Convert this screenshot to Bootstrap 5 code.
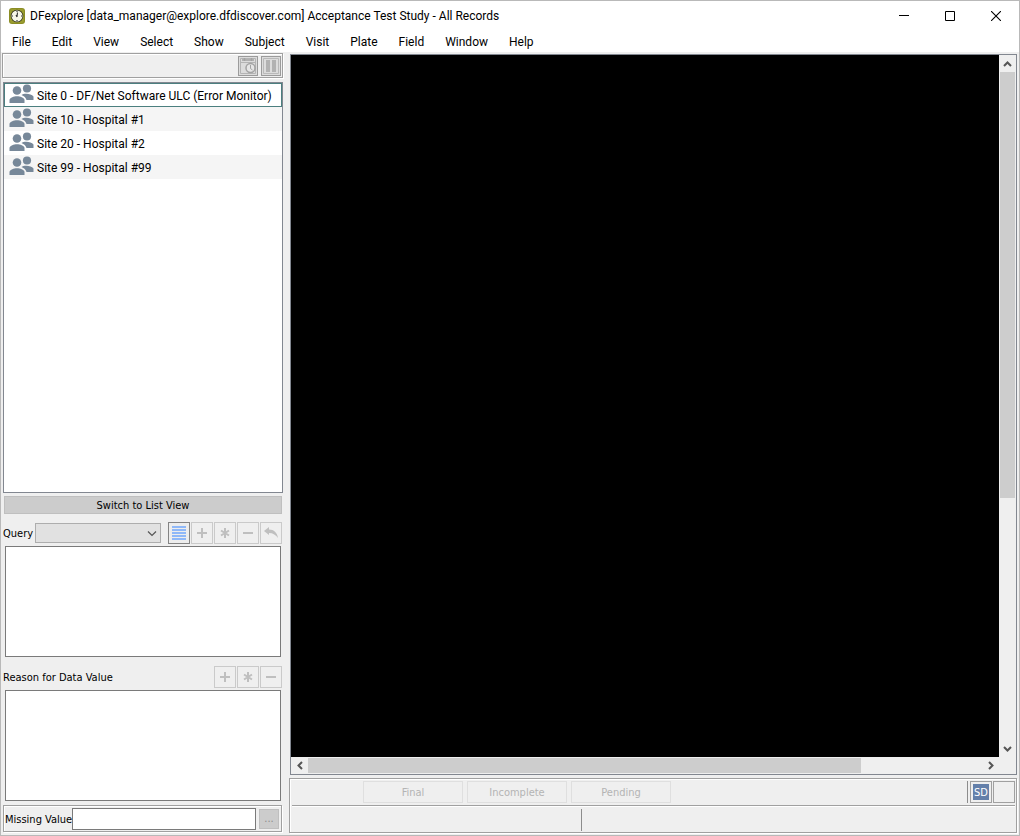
<!DOCTYPE html>
<html lang="en">
<head>
<meta charset="utf-8">
<meta name="viewport" content="width=device-width, initial-scale=1">
<title>DFexplore</title>
<link href="https://cdn.jsdelivr.net/npm/bootstrap@5.3.0/dist/css/bootstrap.min.css" rel="stylesheet">
<style>
  :root { --face: #efefef; --line: #a0a0a0; --dark: #828790; }
  body { font-family: Roboto, "Noto Sans", sans-serif; font-size: 12px; line-height: 16px; color: #000; background: var(--face); }
  button, input, select, textarea { border-radius: 0; font: inherit; }
  svg { display: block; }
  .app-window { border: 1px solid #b9b9b9; }
  .title-bar { height: 30px; padding-left: 8px; background: #fff; }
  .title-text { padding-left: 5px; }
  .win-btn { width: 46px; height: 30px; padding: 0; border: 0; background: transparent; display: grid; place-items: center; }
  .menu-bar { height: 21px; background: #fff; }
  .menu-bar a { color: #000; text-decoration: none; padding: 3px 10px 2px 11px; }
  .work-area { padding: 1px 2px 2px 1px; }
  .side-pane { width: 281px; margin-right: 6px; padding-bottom: 1px; font-family: "DejaVu Sans Condensed", sans-serif; font-size: 11px; }
  .side-pane label { padding-top: 2px; }
  .etched { border: 1px solid var(--line); box-shadow: inset 1px 1px #fff, 1px 1px #fff; }
  .side-tools { height: 25px; padding: 0 1px; gap: 3px; }
  .tool-btn { width: 20px; height: 20px; padding: 0; border: 1px solid #9b9b9b; background: #dcdcdc; }
  .site-list { margin: 4px 0 0 1px; border: 1px solid var(--dark); background: #fff; font-family: Roboto, sans-serif; font-size: 12px; }
  .site-list .list-group-item { height: 24px; padding: 0 0 0 5px; border: 0; border-radius: 0; color: #000; gap: 3px; background: #fff; }
  .site-list .list-group-item span { padding-top: 2px; }
  .site-list .list-group-item svg { margin-bottom: 4px; }
  .site-list .list-group-item:nth-child(even) { background: #f5f5f5; }
  .site-list .list-group-item.current { box-shadow: inset 0 0 0 1px #4b7f7f; }
  .switch-btn { height: 18px; margin: 3px 1px 0 2px; padding: 1px 0 0; border: 1px solid #bfbfbf; background: #cccccc; line-height: 16px; }
  .tool-row { height: 22px; margin: 8px 1px 0 1px; }
  .note-box + .tool-row { margin-top: 9px; }
  .query-box { width: 126px; height: 20px; margin: 0 7px 0 2px; border: 1px solid #adadad; background: #e1e1e1; appearance: none; }
  .select-wrap { position: relative; }
  .select-wrap svg { position: absolute; right: 11px; top: 8px; pointer-events: none; }
  .mini-btns { gap: 1px; }
  .mini-btn { width: 22px; height: 22px; padding: 0; border: 1px solid #cacaca; background: var(--face); display: grid; place-items: center; }
  .mini-btn.active-tool { border-color: #848484; background: #ededed; }
  .note-box { display: block; height: 111px; margin: 2px 2px 0 3px; border: 1px solid #7a7a7a; background: #fff; resize: none; outline: 0; }
  .missing-row { height: 27px; margin: 4px 1px 0 1px; padding-left: 1px; }
  .missing-row input { height: 22px; margin: 0 3px 0 0; border: 1px solid #7a7a7a; min-width: 0; }
  .dots-btn { width: 20px; height: 20px; margin-right: 2px; padding: 0; border: 1px solid #bfbfbf; background: #ccc; color: #8c8c8c; }
  .viewer { margin: 1px 0 0 1px; border: 1px solid var(--dark); }
  .canvas-area { background: #000; }
  .v-scroll { width: 17px; padding: 0 1px; }
  .h-scroll { height: 17px; padding: 1px 17px 1px 0; }
  .scroll-btn { width: 17px; height: 15px; padding: 0; border: 0; background: transparent; display: grid; place-items: center; }
  .v-scroll .scroll-btn { width: 15px; height: 17px; }
  .thumb { background: #cdcdcd; }
  .status-area { height: 55px; margin-top: 3px; }
  .status-top { height: 27px; padding: 2px 0 0; margin: 0 1px 0 2px; border-bottom: 1px solid var(--line); box-shadow: 0 1px #fff; }
  .state-btn { width: 100px; height: 22px; padding: 1px 0 0; border: 1px solid #dfdfdf; background: var(--face); color: #b4b4b4; font-family: "DejaVu Sans Condensed", sans-serif; font-size: 11px; line-height: 20px; }
  .state-group { gap: 4px; margin-left: 71px; }
  .sd-group { gap: 1px; }
  .sd-rule { width: 1px; height: 22px; margin-right: 1px; background: #8c8c8c; }
  .sd-frame { width: 22px; height: 22px; padding: 1px; border: 1px solid var(--line); }
  .sd-btn { height: 18px; padding-top: 1px; border: 1px solid var(--face); background: #6480aa; color: #fff; font-family: "DejaVu Sans Condensed", sans-serif; font-size: 11px; line-height: 16px; text-align: center; }
  .status-split { border-right: 1px solid #8c8c8c; height: 22px; margin-top: 3px; width: 292px; }
</style>
</head>
<body>
<svg class="d-none" aria-hidden="true">
  <symbol id="people" viewBox="0 0 25 19"><g fill="#778899"><circle cx="18" cy="4.500" r="4.100"/><path d="M12.500 11c2-1.800 9.500-2 12 1.600V16h-7c-.5-2.300-2.400-4-5-5z"/><circle cx="8" cy="6.500" r="4.300"/><path d="M.5 19v-3.200C2 11 14 11 15.500 15.800V19z"/></g></symbol>
  <symbol id="plus" viewBox="0 0 12 12"><path d="M6 1v10M1 6h10" stroke="#bfbfbf" stroke-width="2"/></symbol>
  <symbol id="star" viewBox="0 0 12 12"><path d="M6 1v10M2 3.500l8 5M2 8.500l8-5" stroke="#bfbfbf" stroke-width="2"/></symbol>
  <symbol id="minus" viewBox="0 0 12 12"><path d="M1 6h10" stroke="#bfbfbf" stroke-width="2"/></symbol>
</svg>
<div class="app-window vh-100 d-flex flex-column">
  <header class="title-bar d-flex align-items-center flex-shrink-0">
    <svg width="16" height="16" viewBox="0 0 16 16"><rect width="16" height="16" rx="3" fill="#8b8d24"/><rect x="1" y="1" width="14" height="14" rx="2" fill="#9a9c30"/><circle cx="8" cy="8" r="6.300" fill="#33351b"/><circle cx="8" cy="8" r="5.500" fill="#f7f7e9"/><path d="M8 3v1M8 12v1M3 8h1M12 8h1M8.500 4.500 8 9M8 9l-1-2" stroke="#333" stroke-width="1.100"/></svg>
    <span class="title-text flex-grow-1 text-nowrap">DFexplore [data_manager@explore.dfdiscover.com] Acceptance Test Study - All Records</span>
    <button class="win-btn" aria-label="Minimize"><svg width="10" height="10"><path d="M0 4.500h10" stroke="#000"/></svg></button>
    <button class="win-btn" aria-label="Maximize"><svg width="10" height="10"><path d="M.5.5h9v9h-9z" fill="none" stroke="#000"/></svg></button>
    <button class="win-btn" aria-label="Close"><svg width="10" height="10"><path d="M0 0l10 10M10 0L0 10" stroke="#000" stroke-width="1.100"/></svg></button>
  </header>
  <nav class="menu-bar d-flex flex-shrink-0" aria-label="Main menu">
    <a href="#">File</a><a href="#">Edit</a><a href="#">View</a><a href="#">Select</a><a href="#">Show</a><a href="#">Subject</a><a href="#">Visit</a><a href="#">Plate</a><a href="#">Field</a><a href="#">Window</a><a href="#">Help</a>
  </nav>
  <main class="work-area d-flex flex-grow-1">
    <aside class="side-pane d-flex flex-column flex-shrink-0">
      <div class="side-tools etched d-flex align-items-center justify-content-end flex-shrink-0">
        <button class="tool-btn" aria-label="Schedule"><svg width="18" height="18" fill="none" stroke="#a3a3a3"><path d="M1.500 1.500h15v15h-15zM1 5.500h16" stroke="#b4b4b4"/><path d="M5.500 1v3M12.500 1v3M3 3h12" stroke-width="1.500"/><circle cx="11.500" cy="11" r="4.500" fill="#e6e6e6" stroke-width="1.500"/><path d="M11.500 8v3.500l2 1.500"/></svg></button>
        <button class="tool-btn" aria-label="Columns"><svg width="18" height="18"><path d="M1.500 1.500h15v15h-15z" fill="none" stroke="#b9b9b9"/><path d="M4 3h4v12H4zM10 3h4v12h-4z" fill="#b2b2b2"/></svg></button>
      </div>
      <div class="site-list list-group rounded-0 flex-grow-1">
        <a href="#" class="list-group-item current d-flex align-items-center"><svg width="25" height="19"><use href="#people"/></svg><span>Site 0 - DF/Net Software ULC (Error Monitor)</span></a>
        <a href="#" class="list-group-item d-flex align-items-center"><svg width="25" height="19"><use href="#people"/></svg><span>Site 10 - Hospital #1</span></a>
        <a href="#" class="list-group-item d-flex align-items-center"><svg width="25" height="19"><use href="#people"/></svg><span>Site 20 - Hospital #2</span></a>
        <a href="#" class="list-group-item d-flex align-items-center"><svg width="25" height="19"><use href="#people"/></svg><span>Site 99 - Hospital #99</span></a>
      </div>
      <button class="switch-btn flex-shrink-0">Switch to List View</button>
      <div class="tool-row d-flex align-items-center flex-shrink-0">
        <label for="query">Query</label>
        <div class="select-wrap d-flex flex-grow-1"><select id="query" class="query-box flex-grow-1"><option></option></select><svg width="10" height="6"><path d="M1 .5l4 4 4-4" fill="none" stroke="#555" stroke-width="1.200"/></svg></div>
        <div class="mini-btns d-flex">
          <button class="mini-btn active-tool" aria-label="Query list"><svg width="14" height="14"><path d="M0 1h14M0 4h14M0 7h14M0 10h14M0 13h14" stroke="#8fb8f8" stroke-width="2"/></svg></button>
          <button class="mini-btn" aria-label="Add query"><svg width="12" height="12"><use href="#plus"/></svg></button>
          <button class="mini-btn" aria-label="Edit query"><svg width="12" height="12"><use href="#star"/></svg></button>
          <button class="mini-btn" aria-label="Delete query"><svg width="12" height="12"><use href="#minus"/></svg></button>
          <button class="mini-btn" aria-label="Reply"><svg width="16" height="14"><path d="M1 5l5-4v2.500c5 0 8 3 9 8.500-2-3-5-5-9-5V9z" fill="#bfbfbf"/></svg></button>
        </div>
      </div>
      <textarea class="note-box flex-shrink-0" aria-label="Query text"></textarea>
      <div class="tool-row d-flex align-items-center justify-content-between flex-shrink-0">
        <label for="reason">Reason for Data Value</label>
        <div class="mini-btns d-flex">
          <button class="mini-btn" aria-label="Add reason"><svg width="12" height="12"><use href="#plus"/></svg></button>
          <button class="mini-btn" aria-label="Edit reason"><svg width="12" height="12"><use href="#star"/></svg></button>
          <button class="mini-btn" aria-label="Delete reason"><svg width="12" height="12"><use href="#minus"/></svg></button>
        </div>
      </div>
      <textarea id="reason" class="note-box flex-shrink-0"></textarea>
      <div class="missing-row etched d-flex align-items-center flex-shrink-0">
        <label for="missing" class="text-nowrap">Missing Value</label>
        <input id="missing" type="text" class="flex-grow-1">
        <button class="dots-btn">...</button>
      </div>
    </aside>
    <section class="d-flex flex-column flex-grow-1">
      <div class="viewer d-flex flex-column flex-grow-1">
        <div class="d-flex flex-grow-1">
          <div class="canvas-area flex-grow-1"></div>
          <div class="v-scroll d-flex flex-column">
            <button class="scroll-btn" aria-label="Scroll up"><svg width="9" height="6"><path d="M1 5l3.500-3.500L8 5" fill="none" stroke="#555" stroke-width="2"/></svg></button>
            <div class="flex-grow-1"><div class="thumb" style="height:63.8%"></div></div>
            <button class="scroll-btn" aria-label="Scroll down"><svg width="9" height="6"><path d="M1 1l3.500 3.500L8 1" fill="none" stroke="#555" stroke-width="2"/></svg></button>
          </div>
        </div>
        <div class="h-scroll d-flex">
          <button class="scroll-btn" aria-label="Scroll left"><svg width="6" height="9"><path d="M5 1L1.500 4.500 5 8" fill="none" stroke="#555" stroke-width="2"/></svg></button>
          <div class="flex-grow-1 d-flex"><div class="thumb" style="width:82%"></div></div>
          <button class="scroll-btn" aria-label="Scroll right"><svg width="6" height="9"><path d="M1 1l3.500 3.500L1 8" fill="none" stroke="#555" stroke-width="2"/></svg></button>
        </div>
      </div>
      <footer class="status-area etched flex-shrink-0">
        <div class="status-top d-flex">
          <div class="state-group d-flex flex-grow-1">
            <button class="state-btn" disabled>Final</button>
            <button class="state-btn" disabled>Incomplete</button>
            <button class="state-btn" disabled>Pending</button>
          </div>
          <div class="sd-group d-flex">
            <div class="sd-rule"></div>
            <div class="sd-frame"><div class="sd-btn">SD</div></div>
            <div class="sd-frame"></div>
          </div>
        </div>
        <div class="status-split"></div>
      </footer>
    </section>
  </main>
</div>
<script src="https://cdn.jsdelivr.net/npm/bootstrap@5.3.0/dist/js/bootstrap.bundle.min.js"></script>
</body>
</html>
